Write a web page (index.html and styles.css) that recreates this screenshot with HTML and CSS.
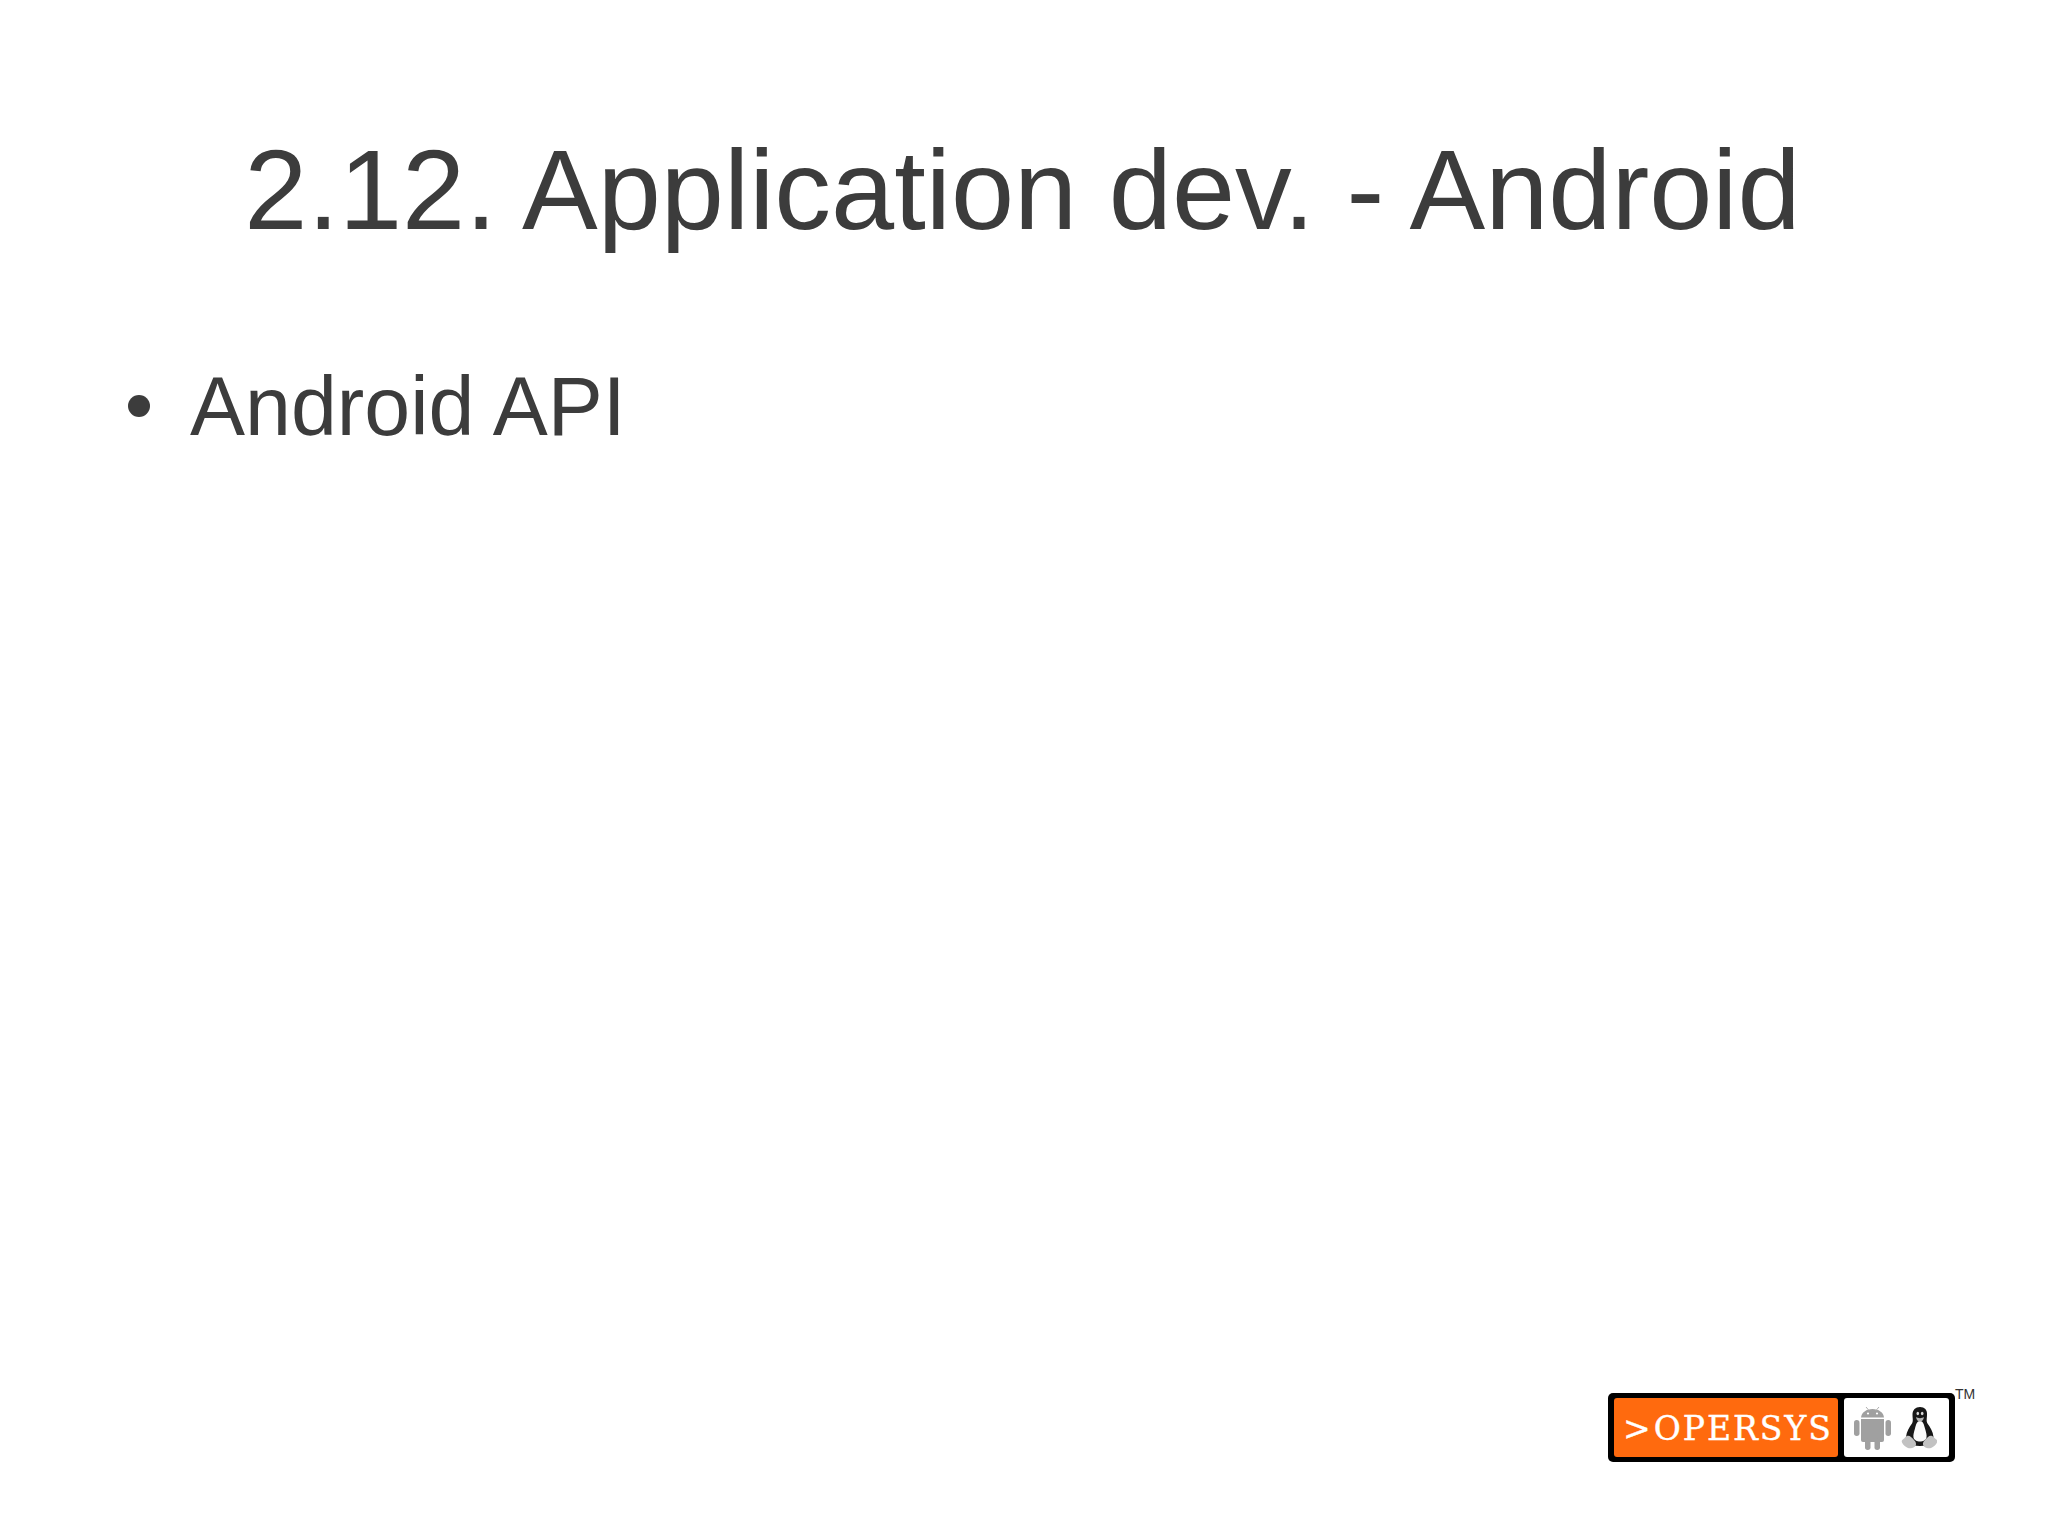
FILE: index.html
```html
<!DOCTYPE html>
<html lang="en">
<head>
<meta charset="utf-8">
<title>2.12. Application dev. - Android</title>
<link rel="stylesheet" href="styles.css">
</head>
<body>
<main class="slide">
  <h1 class="title">2.12. Application dev. - Android</h1>
  <ul class="points">
    <li class="point"><span class="dot"></span><span>Android API</span></li>
  </ul>
  <footer class="foot">
    <div class="logo">
      <div class="brand"><span class="gt">&gt;</span>OPERSYS</div>
      <div class="mascots">
        <svg class="android" viewBox="0 0 37 43" aria-hidden="true">
          <g fill="#a0a0a0">
            <rect x="0" y="13" width="5.500" height="16" rx="2.700"/>
            <rect x="31.500" y="13" width="5.500" height="16" rx="2.700"/>
            <path d="M7 12h23v21a2 2 0 0 1-2 2H9a2 2 0 0 1-2-2z"/>
            <rect x="11" y="31" width="5.500" height="12" rx="2.700"/>
            <rect x="20.500" y="31" width="5.500" height="12" rx="2.700"/>
            <path d="M7 10.500C7.400 5.500 12.500 2 18.500 2s11.100 3.500 11.500 8.500z"/>
          </g>
          <path d="M12 0l3 3.500M25 0l-3 3.500" stroke="#b0b0b0" stroke-width="1" fill="none"/>
          <circle cx="14" cy="6.500" r="1.100" fill="#fff"/>
          <circle cx="23" cy="6.500" r="1.100" fill="#fff"/>
        </svg>
        <svg class="tux" viewBox="0 0 36 42" aria-hidden="true">
          <path d="M19 0c-4.500 0-7.500 3-7.500 7.500 0 4 1 6-.5 9-2.500 3.500-5.500 8-6 13.500-.2 3.500 3 9 14 9s13.700-5.500 13.500-9c-.5-5.500-3.500-10-6-13.500-1.500-3-.5-5-.5-9C26.500 3 23.500 0 19 0z" fill="#171717"/>
          <path d="M19 14c-3 0-4 3.500-5 7.500-1 3.500-2 6.500-1.500 9 .5 2.500 3.500 4 6.500 4s6-1.500 6.500-4c.5-2.500-.5-5.500-1.500-9-1-4-2-7.500-5-7.500z" fill="#fafafa"/>
          <path d="M15 10c2 1.500 6 1.500 8 0-.5 3-2 4.500-4 4.500s-3.500-1.500-4-4.500z" fill="#b5b5b5"/>
          <ellipse cx="16.800" cy="6.500" rx="1.300" ry="1.800" fill="#d8d8d8"/>
          <ellipse cx="21.200" cy="6.500" rx="1.300" ry="1.800" fill="#d8d8d8"/>
          <path d="M1 35.500c-1-3 1.500-3 3-5 1.500-2 4-2.500 6-.5s5.500 4.500 5 7.500c-.5 3-5 4.500-8 3.500-2.500-1-5-3-6-5.500z" fill="#c2c2c2"/>
          <path d="M36 35.500c1-3-1.500-3-3-5-1.500-2-4-2.500-6-.5s-5.500 4.500-5 7.500c.5 3 5 4.500 8 3.500 2.500-1 5-3 6-5.500z" fill="#c2c2c2"/>
        </svg>
      </div>
      <span class="tm">TM</span>
    </div>
  </footer>
</main>
</body>
</html>
```

FILE: styles.css
```css
* { box-sizing: border-box; }
html, body { margin: 0; background: #fff; }
.slide {
  height: 1535px;
  display: flex;
  flex-direction: column;
  font-family: "Liberation Sans", Arial, sans-serif;
  color: #3c3c3c;
  overflow: hidden;
}
.title {
  margin: 123px 0 0;
  padding-right: 3px;
  font-size: 113.500px;
  line-height: 134px;
  font-weight: 400;
  text-align: center;
  white-space: nowrap;
}
.points {
  list-style: none;
  margin: 100px 0 0;
  padding: 0 0 0 128px;
}
.point {
  display: flex;
  align-items: center;
  gap: 40px;
  font-size: 82.500px;
  line-height: 98px;
}
.dot {
  width: 22px;
  height: 22px;
  border-radius: 50%;
  background: #3c3c3c;
}
.foot {
  margin-top: auto;
  padding: 0 93px 73px 0;
  display: flex;
  justify-content: flex-end;
}
.logo {
  position: relative;
  width: 347px;
  height: 69px;
  padding: 5px 6px;
  display: flex;
  gap: 6px;
  background: #000;
  border-radius: 5px;
}
.brand {
  width: 224px;
  padding: 2px 0 0 9px;
  display: flex;
  align-items: center;
  background: #ff6a0e;
  border-radius: 3px;
  color: #fff;
  font-family: "DejaVu Serif", serif;
  font-size: 33px;
  white-space: nowrap;
  letter-spacing: 2px;
  -webkit-text-stroke: 0.4px #fff;
}
.gt { margin-right: 1px; }
.mascots {
  flex: 1;
  padding: 9px 12px 0 10px;
  display: flex;
  align-items: flex-start;
  justify-content: space-between;
  background: #fff;
  border-radius: 3px;
}
.android { width: 37px; height: 43px; }
.tux { width: 36px; height: 42px; }
.tm {
  position: absolute;
  left: 347px;
  top: -7px;
  font-size: 14px;
  line-height: 16px;
  color: #333;
}
```
